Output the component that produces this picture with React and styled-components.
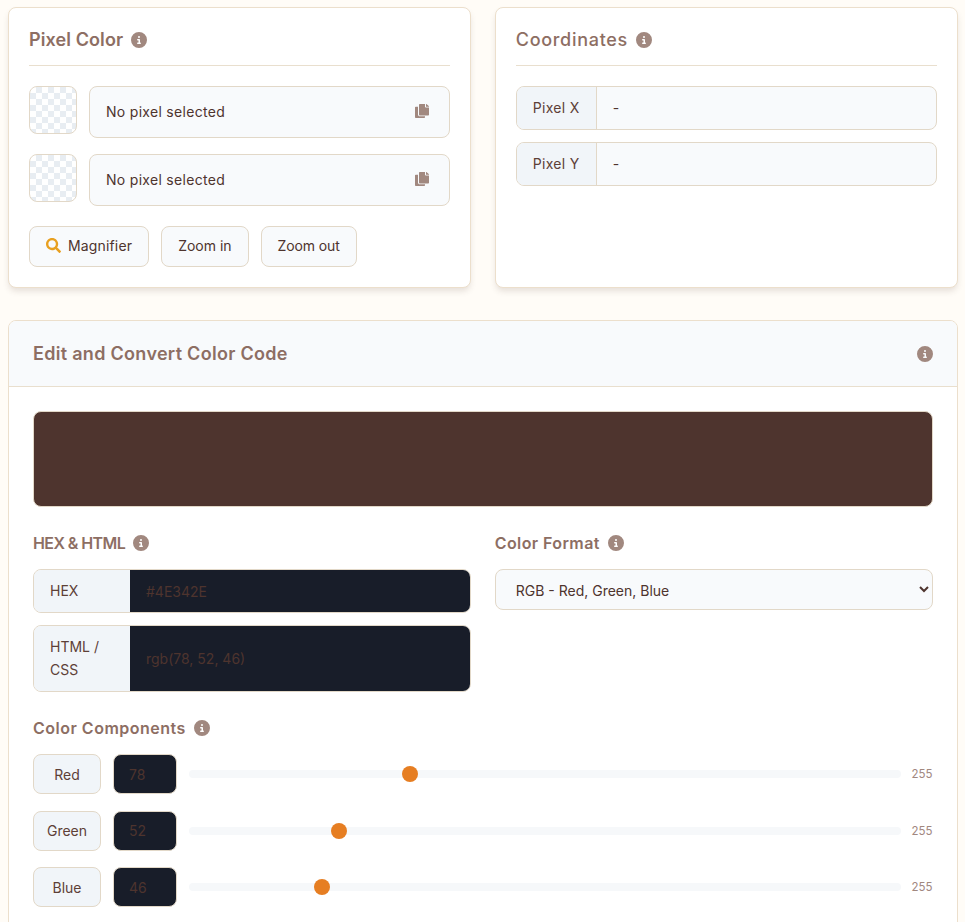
import React from "react";
import styled, { createGlobalStyle } from "styled-components";
import { FaSearch } from "react-icons/fa";
import { FaCircleInfo } from "react-icons/fa6";

const GlobalStyle = createGlobalStyle`
  html, body {
    margin: 0;
    padding: 0;
    overflow: hidden;
    background: #fffcf7;
    font-family: "Inter", "Liberation Sans", sans-serif;
    color: #4e342e;
  }
  * {
    box-sizing: border-box;
  }
`;

const noop = () => {};

function Info() {
  return (
    <InfoIcon>
      <FaCircleInfo />
    </InfoIcon>
  );
}

// solid copy glyph, squashed to a square like the one in the picture
function CopyIcon() {
  return (
    <svg width="14" height="14" viewBox="0 0 448 512" preserveAspectRatio="none" fill="currentColor">
      <path d="M320 448v40c0 13.255-10.745 24-24 24H24c-13.255 0-24-10.745-24-24V120c0-13.255 10.745-24 24-24h72v296c0 30.879 25.121 56 56 56h168zm0-344V0H152c-13.255 0-24 10.745-24 24v368c0 13.255 10.745 24 24 24h272c13.255 0 24-10.745 24-24V128H344c-13.2 0-24-10.8-24-24zm120.971-31.029L375.029 7.029A24 24 0 0 0 358.059 0H352v96h96v-6.059a24 24 0 0 0-7.029-16.97z" />
    </svg>
  );
}

function PixelRow() {
  return (
    <ColorRow>
      <Swatch />
      <PixelValue>
        <span>No pixel selected</span>
        <CopyIcon />
      </PixelValue>
    </ColorRow>
  );
}

function ChannelRow({ name, value }) {
  return (
    <Channel>
      <ChannelName>{name}</ChannelName>
      <ChannelInput value={value} onChange={noop} />
      <Slider type="range" min="0" max="255" value={value} onChange={noop} />
      <ChannelMax>255</ChannelMax>
    </Channel>
  );
}

export default function App() {
  return (
    <Page>
      <GlobalStyle />
      <TopGrid>
        <Card>
          <CardTitle>
            Pixel Color <Info />
          </CardTitle>
          <PixelRow />
          <PixelRow />
          <Buttons>
            <Button $spacing={0.15}>
              <FaSearch />
              Magnifier
            </Button>
            <Button>Zoom in</Button>
            <Button $spacing={-0.12}>Zoom out</Button>
          </Buttons>
        </Card>
        <Card>
          <CardTitle $light>
            Coordinates <Info />
          </CardTitle>
          <CoordRows>
            <Group>
              <CoordLabel>Pixel X</CoordLabel>
              <GroupValue>-</GroupValue>
            </Group>
            <Group>
              <CoordLabel>Pixel Y</CoordLabel>
              <GroupValue>-</GroupValue>
            </Group>
          </CoordRows>
        </Card>
      </TopGrid>

      <Panel>
        <PanelHeader>
          <h2>Edit and Convert Color Code</h2>
          <Info />
        </PanelHeader>
        <PanelBody>
          <Preview />
          <Columns>
            <div>
              <SubTitle $spacing={-0.6}>
                HEX &amp; HTML <Info />
              </SubTitle>
              <CodeRows>
                <Group>
                  <CodeLabel>HEX</CodeLabel>
                  <DarkInput value="#4E342E" onChange={noop} />
                </Group>
                <Group>
                  <CodeLabel $wrapped>HTML / CSS</CodeLabel>
                  <DarkInput value="rgb(78, 52, 46)" onChange={noop} />
                </Group>
              </CodeRows>
            </div>
            <div>
              <SubTitle $spacing={0.4}>
                Color Format <Info />
              </SubTitle>
              <FormatSelect defaultValue="rgb">
                <option value="rgb">RGB - Red, Green, Blue</option>
                <option value="hsl">HSL - Hue, Saturation, Lightness</option>
              </FormatSelect>
            </div>
          </Columns>
          <SubTitle $spacing={0.5}>
            Color Components <Info />
          </SubTitle>
          <Channels>
            <ChannelRow name="Red" value={78} />
            <ChannelRow name="Green" value={52} />
            <ChannelRow name="Blue" value={46} />
          </Channels>
        </PanelBody>
      </Panel>
    </Page>
  );
}

const Page = styled.div`
  padding: 7px 7.5px 0 8px;
`;

const TopGrid = styled.div`
  display: grid;
  grid-template-columns: 1fr 1fr;
  gap: 24px;
  margin-bottom: 32px;
`;

const Card = styled.section`
  height: 281px;
  padding: 20px;
  background: #fff;
  border: 1px solid #ecdfcc;
  border-radius: 8px;
  box-shadow: 0 4px 6px -1px rgba(78, 52, 46, 0.15);
`;

const CardTitle = styled.h3`
  display: flex;
  align-items: center;
  gap: 8px;
  height: 38px;
  margin: 0 0 20px;
  padding-bottom: 14px;
  border-bottom: 1px solid #e9dfce;
  font-size: 18px;
  font-weight: ${(p) => (p.$light ? 500 : 600)};
  letter-spacing: ${(p) => (p.$light ? 0.7 : 0.1)}px;
  color: #8d6e63;
`;

const InfoIcon = styled.span`
  display: inline-flex;
  font-size: 16px;
  color: #a1887f;
`;

const ColorRow = styled.div`
  display: flex;
  align-items: flex-start;
  gap: 12px;
  margin-bottom: 16px;
`;

const Swatch = styled.div`
  width: 48px;
  height: 48px;
  flex: none;
  border: 1px solid #e2d8c8;
  border-radius: 8px;
  background: repeating-conic-gradient(#e8edf2 0 25%, #fff 0 50%) 0 0 / 12px 12px;
`;

const PixelValue = styled.div`
  flex: 1;
  height: 52px;
  display: flex;
  align-items: center;
  justify-content: space-between;
  padding: 0 20px 2px 16px;
  background: #f8fafc;
  border: 1px solid #e2d8c8;
  border-radius: 8px;
  font-size: 14px;
  letter-spacing: 0.3px;
  svg {
    color: #a1887f;
  }
`;

const Buttons = styled.div`
  display: flex;
  gap: 12px;
  margin-top: 20px;
`;

const Button = styled.button`
  display: inline-flex;
  align-items: center;
  gap: 7px;
  height: 41px;
  padding: 0 16px 2px;
  background: #f8fafc;
  border: 1px solid #e2d8c8;
  border-radius: 8px;
  font-family: inherit;
  font-size: 14px;
  letter-spacing: ${(p) => p.$spacing || 0}px;
  color: #4e342e;
  svg {
    font-size: 15px;
    color: #e8a020;
  }
`;

const CoordRows = styled.div`
  display: flex;
  flex-direction: column;
  gap: 12px;
`;

const Group = styled.div`
  display: flex;
  align-items: stretch;
  min-height: 44px;
  border: 1px solid #e2d8c8;
  border-radius: 8px;
  overflow: hidden;
  background: #f8fafc;
`;

const CoordLabel = styled.div`
  display: flex;
  align-items: center;
  flex: none;
  width: 80px;
  padding: 0 16px 2px;
  background: #f1f5f9;
  border-right: 1px solid #e2d8c8;
  font-size: 14px;
  letter-spacing: 0.3px;
  color: #5d4037;
`;

const CodeLabel = styled.div`
  display: flex;
  align-items: center;
  flex: none;
  width: 96px;
  padding: ${(p) => (p.$wrapped ? "10px 16px" : "0 16px")};
  background: #f1f5f9;
  font-size: 14px;
  line-height: 22.5px;
  color: #5d4037;
`;

const GroupValue = styled.div`
  flex: 1;
  display: flex;
  align-items: center;
  padding: 0 16px 2px;
  font-size: 14px;
`;

const DarkInput = styled.input`
  flex: 1;
  min-width: 0;
  padding: 0 16px;
  border: 0;
  outline: 0;
  background: #181d29;
  font-family: inherit;
  font-size: 14px;
  color: #4e342e;
`;

const Panel = styled.section`
  height: 640px;
  background: #fff;
  border: 1px solid #ecdfcc;
  border-radius: 8px;
  overflow: hidden;
`;

const PanelHeader = styled.header`
  display: flex;
  align-items: center;
  justify-content: space-between;
  height: 66px;
  padding: 0 24px;
  background: #f8fafc;
  border-bottom: 1px solid #e9dfce;
  h2 {
    margin: 0;
    font-size: 18px;
    font-weight: 600;
    letter-spacing: 0.3px;
    color: #8d6e63;
  }
`;

const PanelBody = styled.div`
  padding: 24px;
`;

const Preview = styled.div`
  height: 96px;
  margin-bottom: 24px;
  background: #4e342e;
  border: 1px solid #e2d8c8;
  border-radius: 8px;
`;

const Columns = styled.div`
  display: grid;
  grid-template-columns: 1fr 1fr;
  gap: 24px;
  margin-bottom: 24px;
`;

const SubTitle = styled.h4`
  display: flex;
  align-items: center;
  gap: 8px;
  height: 24px;
  margin: 0 0 14px;
  font-size: 16px;
  font-weight: 600;
  letter-spacing: ${(p) => p.$spacing}px;
  color: #8d6e63;
`;

const CodeRows = styled.div`
  display: flex;
  flex-direction: column;
  gap: 12px;
`;

const FormatSelect = styled.select`
  display: block;
  width: 100%;
  height: 41px;
  padding: 1px 4px 0 16px;
  background-color: #f8fafc;
  border: 1px solid #e2d8c8;
  border-radius: 8px;
  font-family: inherit;
  font-size: 14px;
  color: #4e342e;
`;

const Channels = styled.div`
  display: flex;
  flex-direction: column;
  gap: 16.5px;
`;

const Channel = styled.div`
  display: flex;
  align-items: center;
  gap: 12px;
`;

const ChannelName = styled.div`
  width: 68px;
  height: 40px;
  display: flex;
  align-items: center;
  justify-content: center;
  flex: none;
  background: #f1f5f9;
  border: 1px solid #e2d8c8;
  border-radius: 8px;
  font-size: 14px;
  color: #5d4037;
`;

const ChannelInput = styled.input`
  width: 64px;
  height: 40px;
  flex: none;
  padding: 0 15px;
  background: #181d29;
  border: 1px solid #e2d8c8;
  border-radius: 8px;
  outline: 0;
  font-family: inherit;
  font-size: 14px;
  color: #4e342e;
`;

const Slider = styled.input`
  flex: 1;
  min-width: 0;
  height: 8px;
  margin: 0;
  appearance: none;
  background: #f6f8fa;
  border-radius: 4px;
  &::-webkit-slider-thumb {
    appearance: none;
    width: 16px;
    height: 16px;
    border-radius: 50%;
    background: #e67e22;
  }
`;

const ChannelMax = styled.span`
  width: 21px;
  margin-left: -1px;
  font-size: 11.5px;
  color: #a1887f;
`;
